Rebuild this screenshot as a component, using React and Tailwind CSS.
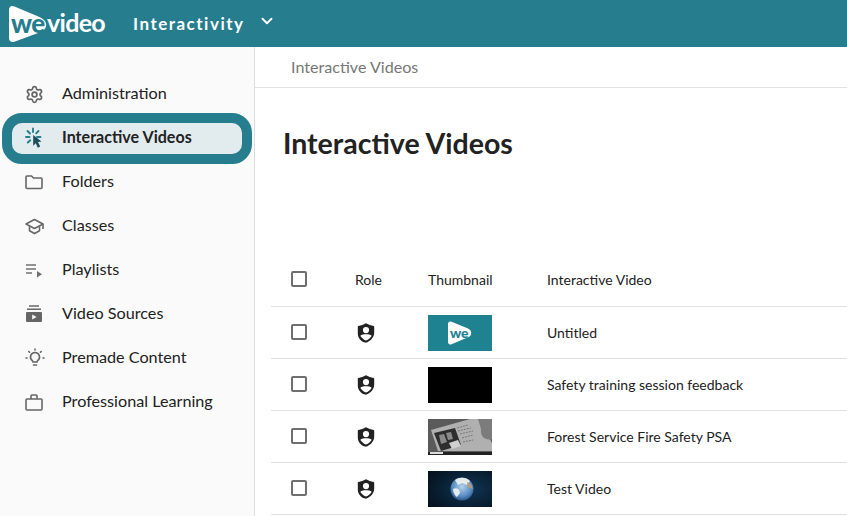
import { ChevronDown, Settings } from "lucide-react";

function ClickIcon() {
  return (
    <svg width="20" height="22" viewBox="0 0 20 22" fill="none">
      <path d="M8 1.500v3.500M2.500 4l2.500 2.500M1 10h3.500M2.800 15.500l2.400-2.200M13.500 4l-2.300 2.400M12 10h3.500" stroke="#267d8e" strokeWidth="1.900" strokeLinecap="round" />
      <path d="M8.200 8l8.300 6.500-3.500.6 2.200 4.500-2.400 1.100-2-4.500-2.600 2.500z" fill="#1f4e5c" />
    </svg>
  );
}

function FolderIcon() {
  return (
    <svg width="18" height="16" viewBox="0 0 18 16" fill="none">
      <path d="M1 3a1 1 0 011-1h4.500l2 2H16a1 1 0 011 1v8.500a1 1 0 01-1 1H2a1 1 0 01-1-1z" stroke="#666" strokeWidth="1.600" />
    </svg>
  );
}

function ClassesIcon() {
  return (
    <svg width="20" height="17" viewBox="0 0 20 17" fill="none">
      <path d="M9.500 1.500L18 6l-8.500 4.500L1 6z" stroke="#666" strokeWidth="1.600" strokeLinejoin="round" />
      <path d="M4.500 8.500v4.200l5 2.800 5-2.800V8.500M18 6v5" stroke="#666" strokeWidth="1.600" strokeLinejoin="round" />
    </svg>
  );
}

function PlaylistIcon() {
  return (
    <svg width="18" height="16" viewBox="0 0 18 16" fill="none">
      <path d="M1 3h10M1 7h10M1 11h6" stroke="#707070" strokeWidth="1.500" />
      <path d="M12 9l5 3.200-5 3.200z" fill="#707070" />
    </svg>
  );
}

function SourcesIcon() {
  return (
    <svg width="18" height="18" viewBox="0 0 18 18" fill="none">
      <path d="M4 1h10" stroke="#666" strokeWidth="1.500" />
      <path d="M2 4.200h14" stroke="#666" strokeWidth="1.500" />
      <path d="M1 8a1 1 0 011-1h14a1 1 0 011 1v8a1 1 0 01-1 1H2a1 1 0 01-1-1z" fill="#666" />
      <path d="M7.200 9.500l4.400 2.500-4.400 2.500z" fill="#fafafa" />
    </svg>
  );
}

function BulbIcon() {
  return (
    <svg width="20" height="20" viewBox="0 0 20 20" fill="none" stroke="#666" strokeWidth="1.600" strokeLinecap="round">
      <path d="M10 4.500a4.500 4.500 0 00-2.700 8.100c.5.400.7.900.7 1.400h4c0-.5.200-1 .7-1.400A4.500 4.500 0 0010 4.500z" />
      <path d="M8.500 17h3M10 1v1M3.800 3.500l.7.700M16.200 3.500l-.7.700M1 10h1M18 10h1" />
    </svg>
  );
}

function CaseIcon() {
  return (
    <svg width="18" height="17" viewBox="0 0 18 17" fill="none" stroke="#666" strokeWidth="1.600">
      <rect x="1" y="5" width="16" height="11" rx="1" />
      <path d="M6 5V2a1 1 0 011-1h4a1 1 0 011 1v3" />
    </svg>
  );
}

function RoleIcon() {
  return (
    <svg width="18" height="20" viewBox="0 0 18 20">
      <path fillRule="evenodd" fill="#222" d="M9 .200c2.500 1.300 5 2.200 7.600 2.800.4.100.6.400.6.800v5.700c0 4.800-3.400 8.400-8.200 10.300C4.200 18.900.800 15.300.800 10.500V3.800c0-.4.200-.7.600-.8C4 2.400 6.500 1.500 9 .200zM9 4a3.100 3.100 0 100 6.200A3.100 3.100 0 009 4zM3.300 12.700c1.200 2.100 3.100 3.700 5.700 4.800 2.600-1.100 4.500-2.700 5.700-4.800-1.500-.9-3.400-1.400-5.700-1.400s-4.200.5-5.700 1.400z" />
    </svg>
  );
}

function WeThumb() {
  return (
    <div className="w-16 h-9 bg-[#1f8291] flex items-center justify-center">
      <div className="relative w-[26px] h-[24px]">
        <svg width="26" height="24" viewBox="0 0 26 24">
          <path d="M1 3c0-2 1.500-3 3.500-2.300l16 6.500c5 2.200 5 7.400 0 9.400L4.500 23.300C2.500 24 1 23 1 21z" fill="#fff" />
        </svg>
        <span className="absolute left-[3px] top-[2px] text-[14px] font-black text-[#1f8291] leading-[20px] tracking-[-0.3px]">we</span>
      </div>
    </div>
  );
}

function PaperThumb() {
  return (
    <div className="w-16 h-9 overflow-hidden">
      <svg className="blur-[0.5px]" width="64" height="36" viewBox="0 0 64 36">
        <rect width="64" height="36" fill="#5a5a5a" />
        <path d="M3 11L42 0h10l12 24v8H10z" fill="#b0b0b0" />
        <path d="M50 0h14v20c-6 2-12-2-11-10z" fill="#7c7c7c" />
        <path d="M6 14l21-5 6 17-20 6z" fill="#2e2e2e" />
        <path d="M21 24l9-3 3 6-9 3z" fill="#d0d0d0" />
        <path d="M11 16l5-1 3 8-6 2zM18 14l5-1 2 7-5 1z" fill="#8a8a8a" />
        <path d="M29 9l11-3M30 12l13-3M32 15l13-3M34 19l11-3M35 23l10-2" stroke="#777" strokeWidth="1" strokeDasharray="2 1" />
        <rect y="33" width="64" height="3" fill="#222" />
        <rect x="2" y="33" width="13" height="2" fill="#ddd" />
      </svg>
    </div>
  );
}

function EarthThumb() {
  return (
    <div className="w-16 h-9 overflow-hidden bg-[#0a1a2c]">
      <svg width="64" height="36" viewBox="0 0 64 36">
        <defs>
          <radialGradient id="space" cx="65%" cy="50%" r="75%">
            <stop offset="0%" stopColor="#0f3554" />
            <stop offset="100%" stopColor="#06121f" />
          </radialGradient>
          <radialGradient id="earth" cx="50%" cy="40%" r="62%">
            <stop offset="0%" stopColor="#b6d2ea" />
            <stop offset="70%" stopColor="#5288c0" />
            <stop offset="100%" stopColor="#2a4f7e" />
          </radialGradient>
        </defs>
        <rect width="64" height="36" fill="url(#space)" />
        <circle cx="34" cy="18" r="11.500" fill="url(#earth)" />
        <path d="M27 9c4-3 11-3 15 1l-3 4-5-2-4 2zM25 18c3-2 7 0 7 4l-3 4c-2-1-4-5-4-8z" fill="#f2f4ee" opacity=".9" />
        <path d="M39 11l4 2 2 5-5-2z" fill="#b59a7c" />
      </svg>
    </div>
  );
}

const navItems = [
  { label: "Administration", icon: <Settings size={19} color="#666" strokeWidth={2.200} /> },
  { label: "Interactive Videos", icon: <ClickIcon />, active: true },
  { label: "Folders", icon: <FolderIcon /> },
  { label: "Classes", icon: <ClassesIcon /> },
  { label: "Playlists", icon: <PlaylistIcon /> },
  { label: "Video Sources", icon: <SourcesIcon /> },
  { label: "Premade Content", icon: <BulbIcon /> },
  { label: "Professional Learning", icon: <CaseIcon /> },
];

const rows = [
  { title: "Untitled", thumb: <WeThumb /> },
  { title: "Safety training session feedback", thumb: <div className="w-16 h-9 bg-black" /> },
  { title: "Forest Service Fire Safety PSA", thumb: <PaperThumb /> },
  { title: "Test Video", thumb: <EarthThumb /> },
];

function Checkbox() {
  return <div className="w-4 h-4 -mt-[2px] border-2 border-[#6f6f6f] rounded-[2px] bg-white" />;
}

export default function App() {
  return (
    <div className="w-[847px] h-[516px] overflow-hidden flex flex-col bg-white text-[#222] font-['Lato',sans-serif]">
      {/* HEADER */}
      <header className="h-[47px] shrink-0 bg-[#267d8e] flex items-center text-white">
        <div className="relative w-[133px] h-[47px] shrink-0">
          <svg className="absolute left-[9px] top-[5px]" width="42" height="38" viewBox="0 0 42 38">
            <path d="M0 5c0-3.500 2.500-5 5.500-3.500l25 10.500c9 4 9 12 0 15.500L6 36.500c-3 1.500-6 0-6-3.500z" fill="#fff" />
          </svg>
          <span className="absolute left-[11px] top-[8px] text-[26px] font-black text-[#267d8e] leading-[30px] tracking-[-0.6px]">we</span>
          <span className="absolute left-[47px] top-[7px] text-[25px] font-bold text-white leading-[30px] tracking-[-0.7px]">video</span>
        </div>
        <span className="text-[17px] font-bold tracking-[1.500px]">Interactivity</span>
        <ChevronDown size={18} strokeWidth={2.500} className="ml-[13px] -mt-[5px]" />
      </header>

      <div className="flex flex-1 min-h-0">
        {/* SIDEBAR */}
        <aside className="w-[255px] shrink-0 bg-[#fafafa] border-r border-[#dcdcdc] pt-[25px]">
          {navItems.map((item) => (
            <div key={item.label} className="h-[44px] flex items-center px-[12px]">
              <div
                className={
                  item.active
                    ? "w-[230px] h-[31px] flex items-center bg-[#e2ecef] rounded-[10px] outline-[10px] outline-[#267d8e] font-bold text-[16.100px]"
                    : "w-[230px] h-[31px] flex items-center text-[16.200px]"
                }
              >
                <span className="w-[50px] pl-[13px] flex items-center">{item.icon}</span>
                <span className="-mt-[2px]">{item.label}</span>
              </div>
            </div>
          ))}
        </aside>

        {/* MAIN */}
        <main className="flex-1 min-w-0">
          <div className="h-[41px] border-b border-[#e2e2e2] pl-[36px] flex items-center text-[16.100px] text-[#777]">
            Interactive Videos
          </div>
          <h1 className="pl-[28px] pt-[36px] h-[165px] text-[28.500px] font-bold leading-[38px]">Interactive Videos</h1>

          <div className="pl-[16px]">
            <div className="h-[54px] border-b border-[#dedede] flex items-center text-[14px]">
              <div className="w-[84px] pl-[20px]"><Checkbox /></div>
              <div className="w-[73px]">Role</div>
              <div className="w-[119px]">Thumbnail</div>
              <div>Interactive Video</div>
            </div>
            {rows.map((row) => (
              <div key={row.title} className="h-[52px] border-b border-[#dedede] flex items-center text-[14px]">
                <div className="w-[84px] pl-[20px]"><Checkbox /></div>
                <div className="w-[73px] pl-[2px]"><RoleIcon /></div>
                <div className="w-[119px]">{row.thumb}</div>
                <div>{row.title}</div>
              </div>
            ))}
          </div>
        </main>
      </div>
    </div>
  );
}
